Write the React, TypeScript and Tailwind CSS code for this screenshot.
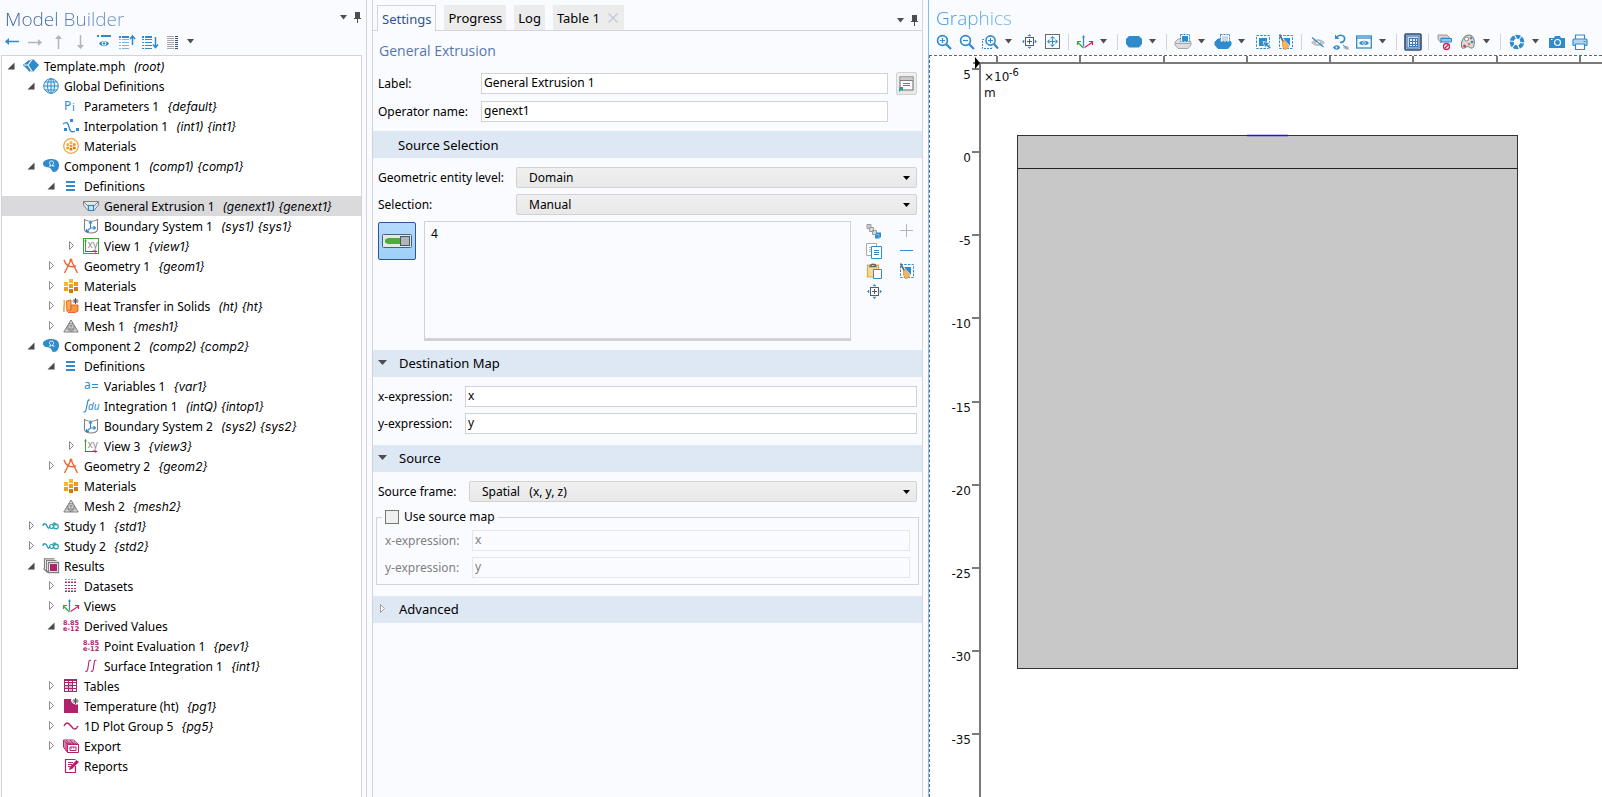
import React, { useState } from "react";

const BLUE = "#2f8bcc";
const GRAY = "#808080";
const LIGHT = "#b4b4b4";
const MAG = "#b0226c";

function Svg({ children, w = 16, h = 16, crisp = false }: { children: React.ReactNode; w?: number; h?: number; crisp?: boolean }) {
  return (
    <svg
      width={w}
      height={h}
      viewBox={`0 0 ${w} ${h}`}
      fill="none"
      aria-hidden="true"
      className="shrink-0 overflow-visible"
      shapeRendering={crisp ? "crispEdges" : undefined}
    >
      {children}
    </svg>
  );
}

/* ---------- tree icons ---------- */

const RootIcon = () => (
  <Svg>
    <path d="M0 7 9 1l2 6-2 7z" fill="#2273b4" />
    <path d="M9 1h1l6 6-6 7H9L6 7z" fill={BLUE} />
    <path d="M0 7 6 2l2 4-3 1 3 2-1 5z" fill={BLUE} />
    <path d="M9.500 1 5 7l4.500 7M1 7h4.500" stroke="#fff" strokeWidth="1.100" />
  </Svg>
);

const GlobeIcon = () => (
  <Svg>
    <circle cx="8" cy="8" r="7.300" stroke={BLUE} fill="#eaf4fc" />
    <ellipse cx="8" cy="8" rx="3.500" ry="7.300" stroke={BLUE} />
    <path d="M8 .7v14.600M.7 8h14.600M2 4h12M2 12h12" stroke={BLUE} />
  </Svg>
);

const ParamIcon = () => (
  <Svg>
    <text x="1" y="11.500" fontSize="12" fontFamily="Noto Sans, sans-serif" fill={BLUE}>P</text>
    <text x="9" y="13" fontSize="11" fontFamily="Noto Sans, sans-serif" fill={BLUE}>i</text>
  </Svg>
);

const InterpIcon = () => (
  <Svg>
    <path d="M0 6c4-3 5-1 6 3s2 6 6 4" stroke={BLUE} strokeWidth="1.300" />
    <path d="M7 1h3v3H7zM1 10h3v3H1zM13 10h3v3h-3z" fill={BLUE} />
  </Svg>
);

const Bricks = () => (
  <>
    <path d="M1 4h4v4H1zM6 1h4v4H6z" fill="#f9b92c" />
    <path d="M11 4h4v4h-4zM6 6h4v4H6zM1 9h4v4H1z" fill="#f39a1e" />
    <path d="M11 9h4v4h-4zM6 11h4v4H6z" fill="#cf7a18" />
  </>
);

const MaterialsIcon = () => <Svg crisp><Bricks /></Svg>;

const GlobalMaterialsIcon = () => (
  <Svg>
    <circle cx="8" cy="8" r="7.300" stroke="#f0a040" strokeWidth="1.200" fill="#fff" />
    <g transform="translate(2.700 2.700) scale(.66)"><Bricks /></g>
  </Svg>
);

const ComponentIcon = () => (
  <Svg>
    <path d="M0 5C1 2 5 1 8 1c5 0 8 2 8 6s-2 7-5 7c-2 0-2-2-3-3-1-2-3-1.500-5-2C1 8.500-.3 7 0 5z" fill={BLUE} />
    <path d="M6 8h2V7C6 6 6 3 8.500 3S11 6 9.500 7v1h2" stroke="#fff" strokeWidth="1" />
  </Svg>
);

const DefinitionsIcon = () => (
  <Svg crisp><path d="M3 3h9v2H3zM3 7h9v2H3zM3 11h9v2H3z" fill={BLUE} /></Svg>
);

const ExtrusionIcon = () => (
  <Svg>
    <path d="M.5 3.500h15v3.500L11 12.500H5L.5 7z" fill="#e6e6e8" stroke={GRAY} />
    <path d="M.5 3.500 5 8M15.500 3.500 11 8" stroke={GRAY} />
    <rect x="5.500" y="7.500" width="5" height="5" fill="#cfe6f8" stroke={BLUE} strokeWidth="1.200" />
  </Svg>
);

const BoundaryIcon = () => (
  <Svg>
    <path d="M1.500 1v11c2 4 11 4 13 0V1M1.500 1c2 3 11 3 13 0" stroke={GRAY} strokeWidth="1.100" />
    <path d="M7.500 4v6h4M7.500 10 4 13M6 5.500l1.500-2L9 5.500M10.500 8l2 2-2 1.500M3.500 11v2.500H6" stroke={BLUE} strokeWidth="1.100" />
  </Svg>
);

const ViewIcon = ({ boxed = false }: { boxed?: boolean }) => (
  <Svg>
    {boxed && <rect x=".5" y=".5" width="15" height="15" stroke="#3fa535" fill="#fff" />}
    <path d="M2.500 1.500v12" stroke="#3fa535" />
    <path d="M1 3.500 2.500 1 4 3.500" fill="#3fa535" />
    <path d="M2 13.500h12" stroke="#d81e62" />
    <path d="m12 12 2.500 1.500L12 15" fill="#d81e62" />
    <text x="4.500" y="9.500" fontSize="10" fontFamily="Noto Sans, sans-serif" fill="#8c8c8c">xy</text>
  </Svg>
);

const GeometryIcon = () => (
  <Svg>
    <path d="M1 2c2 6 6 8 12 6M8 2 1.500 15M8 2l6.500 13" stroke="#ee6a3c" strokeWidth="1.500" />
    <circle cx="8" cy="2" r="1.600" fill="#ee6a3c" />
  </Svg>
);

const Star = () => <path d="M12.500 0v6M9.500 3h6M10.500 1l4 4M14.500 1l-4 4" stroke="#555" />;

const HeatIcon = () => (
  <Svg>
    <path d="M1 2c1.500 4-1 7 0 12" stroke="#f3a43c" strokeWidth="1.600" />
    <path d="M3.500 3 8 2v9l-4 2.500z" fill="#f8b24a" stroke="#e8622c" />
    <path d="M8 7h7v6l-3 1.500H5L8 12z" fill="#f49a36" stroke="#e8622c" />
    <Star />
  </Svg>
);

const MeshIcon = () => (
  <Svg>
    <path d="M8 2 .8 14h14.400z" fill="#d9d9d9" stroke={GRAY} />
    <path d="M4.400 8h7.200L8 14zM6 5.500h4L8 8zM2.500 11h11M8 8v6M4.400 8l2 6M11.600 8l-2 6" stroke={GRAY} strokeWidth=".7" />
  </Svg>
);

const VariablesIcon = () => (
  <Svg>
    <text x="1" y="11" fontSize="12" fontFamily="Noto Sans, sans-serif" fill={BLUE}>a</text>
    <path d="M9 6.500h6M9 9.500h6" stroke={BLUE} strokeWidth="1.100" />
  </Svg>
);

const IntegrationIcon = () => (
  <Svg>
    <path d="M7 2C5 1.500 4.700 3 4.300 5.500L3 12c-.4 2-1.400 2.200-2.600 1.700" stroke={BLUE} strokeWidth="1.200" />
    <text x="5" y="12" fontSize="10" fontStyle="italic" fontFamily="Noto Sans, sans-serif" fill={BLUE}>du</text>
  </Svg>
);

const StudyIcon = () => (
  <Svg>
    <path d="M0 8c0-3 3-3 4 0s2 3 3 0" stroke="#2a9db5" strokeWidth="1.300" />
    <circle cx="8.500" cy="8.500" r="2" stroke="#2a9db5" strokeWidth="1.200" />
    <circle cx="13" cy="8.500" r="2.300" stroke="#2a9db5" strokeWidth="1.200" />
    <path d="M10 7.500c0-4 3-3 3 0" stroke="#2a9db5" strokeWidth="1.200" />
  </Svg>
);

const ResultsIcon = () => (
  <Svg>
    <path d="M5.500 4.500h10v10h-10z" fill="#fff" stroke={GRAY} strokeWidth="1.300" />
    <path d="M7 6h7v7H7z" fill={MAG} />
    <path d="M3.500 12.500V2.500h10M5.500 14.500l-2-2v-10M1.500 10.500V.8h10M.5 10.500l4 4" stroke={GRAY} strokeWidth="1.200" />
  </Svg>
);

const DatasetsIcon = () => (
  <Svg crisp>
    {[1, 4, 7, 10, 13].map((y, i) => (
      <path key={y} d={`M2 ${y + 0.5}h2M5 ${y + 0.5}h2M8 ${y + 0.5}h2M11 ${y + 0.5}h2`} stroke={i === 0 ? "#999" : MAG} />
    ))}
    <path d="M2 3.500h2M5 3.500h2M8 3.500h2M11 3.500h2M2 12h2M5 12h2M8 12h2M11 12h2" stroke="#b9a0ad" />
  </Svg>
);

const AxesIcon = () => (
  <Svg>
    <path d="M6.500 2v10.500" stroke={BLUE} strokeWidth="1.300" />
    <path d="M5 3.500 6.500 1 8 3.500z" fill={BLUE} />
    <path d="M6.500 14 1 8.500M.5 11V7.500H4" stroke="#3fa535" strokeWidth="1.200" />
    <path d="m7.500 13.500 7.500-5M12 7.500h3.500V11" stroke="#d81e62" strokeWidth="1.200" />
  </Svg>
);

const DerivedIcon = () => (
  <Svg>
    <text x="0" y="7" fontSize="6.500" fontWeight="700" fontFamily="DejaVu Sans, sans-serif" fill={MAG}>8.85</text>
    <text x="0" y="13" fontSize="6.500" fontWeight="700" fontFamily="DejaVu Sans, sans-serif" fill={MAG}>e-12</text>
  </Svg>
);

const SurfaceIcon = () => (
  <Svg>
    <path d="M8 2.500C6 1.500 6 3 5.700 5L4.800 11c-.3 2-1 3-2.500 2M13.500 2.500c-2-1-2 .5-2.300 2.500l-.9 6c-.3 2-1 3-2.500 2" stroke={MAG} strokeWidth="1.100" />
  </Svg>
);

const TablesIcon = () => (
  <Svg crisp>
    <path d="M1 7h4v3H1zM5 4h4v9H5z" fill="#e3b3cb" />
    <path d="M1.500 1.500h12v12h-12zM5.500 1v12M9.500 1v12M1 4.500h12M1 7.500h12M1 10.500h12" stroke={MAG} />
    <path d="M1 1h13v2H1z" fill={MAG} />
  </Svg>
);

const TemperatureIcon = () => (
  <Svg>
    <path d="M1 1h7c-.5 3 2 6 7 5.500V15H1z" fill={MAG} />
    <Star />
  </Svg>
);

const PlotIcon = () => (
  <Svg><path d="M1 8c2-4 4-4 7 0s5 4 7 0" stroke={MAG} strokeWidth="1.400" /></Svg>
);

const ExportIcon = () => (
  <Svg>
    <path d="M4.500 6.500h11v8h-11zM4.500 6.500.5 2v7l4 5.500M.5 2h10l5 4.500M2 4h10M3.200 5.300h10.500M2 4v7M3.200 5.500V13M3 2l4 4.500M7 2l4 4.500" stroke={MAG} />
    <path d="M7 9h6v3.500H7z" stroke={MAG} /><path d="M8 10h4" stroke={MAG} strokeDasharray="1 1" />
  </Svg>
);

const ReportsIcon = () => (
  <Svg>
    <path d="M12.500 8v6.500h-10v-13h10" stroke={MAG} strokeWidth="1.200" />
    <path d="M5 4.500h5M5 6.500h4M5 8.500h2" stroke={MAG} />
    <path d="m6 12 .8-3L13.500 2 16 4l-7 7z" fill={MAG} />
  </Svg>
);

type Node = { level: number; state: "open" | "closed" | "leaf"; icon: React.ReactNode; name: string; tag?: string };

const tree: Node[] = [
  { level: 0, state: "open", icon: <RootIcon />, name: "Template.mph", tag: "(root)" },
  { level: 1, state: "open", icon: <GlobeIcon />, name: "Global Definitions" },
  { level: 2, state: "leaf", icon: <ParamIcon />, name: "Parameters 1", tag: "{default}" },
  { level: 2, state: "leaf", icon: <InterpIcon />, name: "Interpolation 1", tag: "(int1) {int1}" },
  { level: 2, state: "leaf", icon: <GlobalMaterialsIcon />, name: "Materials" },
  { level: 1, state: "open", icon: <ComponentIcon />, name: "Component 1", tag: "(comp1) {comp1}" },
  { level: 2, state: "open", icon: <DefinitionsIcon />, name: "Definitions" },
  { level: 3, state: "leaf", icon: <ExtrusionIcon />, name: "General Extrusion 1", tag: "(genext1) {genext1}" },
  { level: 3, state: "leaf", icon: <BoundaryIcon />, name: "Boundary System 1", tag: "(sys1) {sys1}" },
  { level: 3, state: "closed", icon: <ViewIcon boxed />, name: "View 1", tag: "{view1}" },
  { level: 2, state: "closed", icon: <GeometryIcon />, name: "Geometry 1", tag: "{geom1}" },
  { level: 2, state: "closed", icon: <MaterialsIcon />, name: "Materials" },
  { level: 2, state: "closed", icon: <HeatIcon />, name: "Heat Transfer in Solids", tag: "(ht) {ht}" },
  { level: 2, state: "closed", icon: <MeshIcon />, name: "Mesh 1", tag: "{mesh1}" },
  { level: 1, state: "open", icon: <ComponentIcon />, name: "Component 2", tag: "(comp2) {comp2}" },
  { level: 2, state: "open", icon: <DefinitionsIcon />, name: "Definitions" },
  { level: 3, state: "leaf", icon: <VariablesIcon />, name: "Variables 1", tag: "{var1}" },
  { level: 3, state: "leaf", icon: <IntegrationIcon />, name: "Integration 1", tag: "(intQ) {intop1}" },
  { level: 3, state: "leaf", icon: <BoundaryIcon />, name: "Boundary System 2", tag: "(sys2) {sys2}" },
  { level: 3, state: "closed", icon: <ViewIcon />, name: "View 3", tag: "{view3}" },
  { level: 2, state: "closed", icon: <GeometryIcon />, name: "Geometry 2", tag: "{geom2}" },
  { level: 2, state: "leaf", icon: <MaterialsIcon />, name: "Materials" },
  { level: 2, state: "leaf", icon: <MeshIcon />, name: "Mesh 2", tag: "{mesh2}" },
  { level: 1, state: "closed", icon: <StudyIcon />, name: "Study 1", tag: "{std1}" },
  { level: 1, state: "closed", icon: <StudyIcon />, name: "Study 2", tag: "{std2}" },
  { level: 1, state: "open", icon: <ResultsIcon />, name: "Results" },
  { level: 2, state: "closed", icon: <DatasetsIcon />, name: "Datasets" },
  { level: 2, state: "closed", icon: <AxesIcon />, name: "Views" },
  { level: 2, state: "open", icon: <DerivedIcon />, name: "Derived Values" },
  { level: 3, state: "leaf", icon: <DerivedIcon />, name: "Point Evaluation 1", tag: "{pev1}" },
  { level: 3, state: "leaf", icon: <SurfaceIcon />, name: "Surface Integration 1", tag: "{int1}" },
  { level: 2, state: "closed", icon: <TablesIcon />, name: "Tables" },
  { level: 2, state: "closed", icon: <TemperatureIcon />, name: "Temperature (ht)", tag: "{pg1}" },
  { level: 2, state: "closed", icon: <PlotIcon />, name: "1D Plot Group 5", tag: "{pg5}" },
  { level: 2, state: "closed", icon: <ExportIcon />, name: "Export" },
  { level: 2, state: "leaf", icon: <ReportsIcon />, name: "Reports" },
];

const indent = ["pl-[3px]", "pl-[23px]", "pl-[43px]", "pl-[63px]"];

/* ---------- shared bits ---------- */

const Down = () => (
  <Svg w={9} h={5}><path d="M1 0h7L4.500 4.500z" fill="#4d4d4d" /></Svg>
);

const Pin = () => (
  <Svg w={9} h={11} crisp><path d="M2 0h5v6h1v1H5v4H4V7H1V6h1z" fill="#4d4d4d" /></Svg>
);

function IconButton({ label, children, className = "w-[23px]" }: { label: string; children: React.ReactNode; className?: string }) {
  return (
    <button type="button" aria-label={label} className={`flex h-5 shrink-0 items-center justify-center ${className}`}>
      {children}
    </button>
  );
}

const Arrow = ({ dir, color }: { dir: number; color: string }) => (
  <Svg>
    <g transform={`rotate(${dir} 8 8)`}>
      <path d="M2 7.500h13" stroke={color} strokeWidth="1.500" />
      <path d="M1 7.500 5 4v7z" fill={color} />
    </g>
  </Svg>
);

const ShowIcon = () => (
  <Svg>
    <path d="M1 2h2M5 2h10" stroke={BLUE} strokeWidth="2" />
    <path d="M3 9.500C5 6 11 6 13 9.500c-2 3.500-8 3.500-10 0z" fill={BLUE} />
    <circle cx="8" cy="9.500" r="2.300" fill="#fff" /><circle cx="8" cy="9.500" r="1.200" fill={BLUE} />
  </Svg>
);

const ListArrow = ({ up }: { up: boolean }) => (
  <Svg>
    <g shapeRendering="crispEdges">
      <path d="M0 2.500h2M3 2.500h7M0 14.500h2M3 14.500h7M0 5.500h2M3 5.500h7M0 8.500h2M3 8.500h7M0 11.500h2M3 11.500h7" stroke={up ? "#7db5de" : BLUE} />
      <path d="M0 2.500h2M3 2.500h7" stroke={BLUE} strokeWidth="2" />
    </g>
    {up ? (
      <path d="M13.500 3v8M11 5l2.500-3L16 5" stroke={BLUE} strokeWidth="1.500" />
    ) : (
      <path d="M13.500 3v10M11 10.500l2.500 3 2.500-3" stroke={BLUE} strokeWidth="1.500" />
    )}
  </Svg>
);

const ColumnsIcon = () => (
  <Svg crisp>
    <path d="M2 2.500h7M2 4.500h7M2 6.500h7M2 8.500h7M2 10.500h7M2 12.500h7M2 14.500h7" stroke="#a9a9a9" />
    <path d="M10 2.500h3M10 4.500h3M10 6.500h3M10 8.500h3M10 10.500h3M10 12.500h3M10 14.500h3" stroke="#2f4f78" />
  </Svg>
);

/* ---------- graphics toolbar icons ---------- */

const Zoom = ({ plus }: { plus: boolean }) => (
  <Svg>
    <circle cx="6.500" cy="6.500" r="4.900" stroke={BLUE} strokeWidth="1.700" />
    <path d="m10 10 5 5" stroke={BLUE} strokeWidth="2.200" />
    <path d={plus ? "M4 6.500h5M6.500 4v5" : "M4 6.500h5"} stroke={BLUE} strokeWidth="1.200" />
  </Svg>
);

const ZoomBox = () => (
  <Svg w={18}>
    <path d="M3 5.500H1.500v9H11V13" stroke={BLUE} strokeDasharray="2 1" />
    <circle cx="9.500" cy="6.500" r="4.600" stroke={BLUE} strokeWidth="1.600" />
    <path d="m13 10 4 4.500" stroke={BLUE} strokeWidth="2.200" />
    <path d="M7 6.500h5M9.500 4v5" stroke={BLUE} strokeWidth="1.200" />
  </Svg>
);

const ZoomSelected = () => (
  <Svg w={15} h={15}>
    <rect x="3.500" y="3.500" width="8" height="8" stroke="#5c5c5c" />
    <path d="M5 7.500h5M7.500 5v5" stroke="#5c5c5c" />
    <path d="M6 2 7.500.3 9 2zM6 13l1.500 1.700L9 13zM2 6 .3 7.500 2 9zM13 6l1.700 1.500L13 9z" fill={BLUE} stroke={BLUE} strokeWidth=".5" />
  </Svg>
);

const ZoomExtents = () => (
  <Svg w={15} h={15}>
    <rect x=".5" y=".5" width="14" height="14" stroke="#6a6a6a" />
    <path d="M7.500 5v5M5 7.500h5" stroke={BLUE} />
    <path d="M5 4.500 7.500 2 10 4.500zM5 10.500 7.500 13l2.500-2.500zM4.500 5 2 7.500 4.500 10zM10.500 5 13 7.500 10.500 10z" fill={BLUE} />
  </Svg>
);

const BlobIcon = () => <Svg><path d="M3 2h10l3 3v5l-3 3.500H3L0 10V5z" fill={BLUE} /></Svg>;

const BlobSelect = ({ solid }: { solid: boolean }) => (
  <Svg>
    <path d="M3 5h10l3 3v3l-3 3.500H3L0 11V8z" fill={solid ? BLUE : "#dcdcdc"} stroke={solid ? BLUE : "#a8a8a8"} />
    {!solid && <path d="M0 9.500h16" stroke="#a8a8a8" />}
    <rect x="5.500" y="1" width="9" height="7" fill="#fff" />
    <rect x="7" y="2" width="6" height="5" fill={solid ? "#cfd6dc" : BLUE} />
    <rect x="5.500" y=".5" width="9" height="7" stroke={BLUE} strokeDasharray="2 1" />
  </Svg>
);

const SelectBox = () => (
  <Svg>
    <rect x="1.500" y="1.500" width="13" height="13" stroke={BLUE} strokeDasharray="2.500 1.200" />
    <rect x="4" y="4" width="8" height="8" fill={BLUE} />
    <path d="M8 7.500 15 9l-2 1.500 3 3-1.500 1.500-3-3-1.500 2z" fill={BLUE} stroke="#fff" strokeWidth=".7" />
  </Svg>
);

const BroomIcon = () => (
  <Svg>
    <rect x="1.500" y="1.500" width="13" height="13" stroke={BLUE} strokeDasharray="2.500 1.200" />
    <path d="M5 4h7v8z" fill={BLUE} />
    <path d="M1.500.5 5.500 8" stroke="#666" strokeWidth="1.600" />
    <path d="m4.500 8 2-1.500 4 5.500c0 2-1.500 3.500-4 3.500L4.500 12z" fill="#f6b562" stroke="#e08c2e" strokeWidth=".7" />
  </Svg>
);

const EyeOff = () => (
  <Svg>
    <path d="M1 8.500c3-4.500 11-4.500 14 0-3 4.500-11 4.500-14 0z" fill="#c4c4c4" />
    <circle cx="8" cy="8.500" r="2.500" fill="#fff" stroke="#aaa" />
    <path d="m2 3.500 11.500 9.500" stroke={BLUE} strokeWidth="1.200" />
  </Svg>
);

const ResetView = () => (
  <Svg>
    <path d="M4 3c3.500-3.500 8.500-1 7.500 2.500C11 8 9 8.500 7 8.500" stroke={BLUE} strokeWidth="1.600" />
    <path d="M2 .5V5h4.500z" fill={BLUE} />
    <path d="M0 13.500c2-3 6-3 7 0-1 3-5 3-7 0z" fill={BLUE} /><circle cx="3.500" cy="13.500" r="1" fill="#fff" />
    <path d="M10 13.500c1-2 5-2 6 0-1 2.500-5 2.500-6 0z" fill="#c4c4c4" /><path d="m10 11 5.500 4.500" stroke={BLUE} />
  </Svg>
);

const WindowEye = () => (
  <Svg>
    <rect x=".7" y="2" width="14.600" height="12" stroke={BLUE} strokeWidth="1.300" />
    <path d="M1 4h14" stroke={BLUE} strokeWidth="1.300" />
    <path d="M3 9c2-3 8-3 10 0-2 3-8 3-10 0z" fill={BLUE} /><circle cx="8" cy="9" r="1.700" fill="#fff" /><circle cx="8" cy="9" r=".9" fill={BLUE} />
  </Svg>
);

const GridIcon = () => (
  <Svg w={18} h={18}>
    <rect x="1" y="1" width="16" height="16" rx="1" fill="#a9cdee" stroke="#2b4a7d" strokeWidth="1.600" />
    <rect x="3" y="3" width="12" height="12" fill="#c4dcf4" stroke="#5a6f8c" />
    <g shapeRendering="crispEdges">
      <path d="M5 5h9v9H5z" fill="#3b7cc0" />
      <path d="M6 6h2v2H6zM9 6h2v2H9zM12 6h1v2h-1zM6 9h2v2H6zM9 9h2v2H9zM12 9h1v2h-1zM6 12h2v1H6zM9 12h2v1H9zM12 12h1v1h-1z" fill="#eaf3fc" />
    </g>
  </Svg>
);

const ClipIcon = () => (
  <Svg>
    <path d="M1 1h9l3 3H4v5L1 5z" fill="#d5d5d5" stroke="#999" />
    <path d="M4 4.500h10.500V8H4z" fill="#8cc6ec" stroke={BLUE} />
    <circle cx="9.500" cy="12.500" r="3" fill="#fff" stroke="#cf2058" strokeWidth="1.300" /><path d="m7.500 14.500 4-4" stroke="#cf2058" strokeWidth="1.300" />
  </Svg>
);

const PaletteIcon = () => (
  <Svg>
    <path d="M1.500 13C1 8 3 1 9 1c6 0 6 9 4.500 12-2 3-5-1-6-.5-2 1-5 3-6 .5z" fill="#d9d9d9" stroke="#777" />
    <circle cx="6.500" cy="5" r="2" fill="#fff" stroke="#888" />
    <circle cx="11" cy="4" r="1.400" fill="#888" /><circle cx="12" cy="8" r="1.300" fill={BLUE} />
    <circle cx="9" cy="10" r="1.300" fill="#ee7a2c" /><circle cx="4.500" cy="12" r="1.300" fill="#d81e62" />
  </Svg>
);

const ApertureIcon = () => (
  <Svg>
    <circle cx="8" cy="8" r="5.300" stroke={BLUE} strokeWidth="4" />
    <path d="M5 0 7.500 5M13 1.500 9.500 6M16 9l-6-.5M11 16l-2.500-5M3 14l3-4M0 7l6 .5" stroke="#fafbff" strokeWidth="1.200" />
  </Svg>
);

const CameraIcon = () => (
  <Svg>
    <path d="M0 4h5l1-2h5l1 2h4v10H0z" fill={BLUE} />
    <circle cx="8.500" cy="8.500" r="3" stroke="#fff" strokeWidth="1.200" />
    <path d="M2 5.500h1.500" stroke="#fff" />
  </Svg>
);

const PrinterIcon = () => (
  <Svg>
    <path d="M3.500 5V1h9v4" fill="#fff" stroke={BLUE} strokeWidth="1.200" />
    <rect x="1" y="5" width="14" height="6.500" rx="1" fill="#b5d3ee" stroke={BLUE} strokeWidth="1.200" />
    <path d="M3.500 10h9v5.500h-9z" fill="#fff" stroke={BLUE} strokeWidth="1.200" />
    <path d="M11.500 7.500h2" stroke={BLUE} />
  </Svg>
);

/* ---------- selection list icons ---------- */

const ChainIcon = () => (
  <Svg>
    <path d="M1 1.500h4v4H1z" fill="#cfcfcf" stroke="#999" /><path d="M3.500 4.500h4v4h-4zM6.500 7.500h4v4h-4z" fill="#dcdcdc" stroke="#999" />
    <path d="m9 11 2-1.500h4V14l-2 1.500H9z" fill={BLUE} /><path d="M9 11.500h4V15" stroke="#8cc6ec" strokeWidth=".8" />
  </Svg>
);

const CopyIcon = () => (
  <Svg>
    <path d="M.5.500h10v12H.5z" fill="#fff" stroke="#aaa" /><path d="M3 4.500h3M3 6.500h3M3 8.500h3" stroke="#bbb" />
    <path d="M5.500 3.500h10v12h-10z" fill="#fff" stroke={BLUE} /><path d="M8 7.500h5M8 9.500h5M8 11.500h5" stroke={BLUE} strokeWidth="1.100" />
  </Svg>
);

const PasteIcon = () => (
  <Svg>
    <path d="M1.500 2h11v12h-11z" fill="#fbd795" stroke="#eea23a" strokeWidth="1.200" />
    <path d="M4 3.500c0-3 6-3 6 0z" fill="#fff" stroke="#666" strokeWidth="1.300" />
    <path d="M7.500 6.500h8v9h-8z" fill="#fff" stroke={BLUE} />
  </Svg>
);

const PlusIcon = () => <Svg crisp><path d="M1 7.500h13M7.500 1v13" stroke={LIGHT} /></Svg>;
const MinusIcon = () => <Svg crisp><path d="M1 7.500h13" stroke={BLUE} /></Svg>;

const NewWindowIcon = () => (
  <Svg w={17}>
    <rect x="2" y="1" width="13" height="13" fill="#fff" stroke={GRAY} strokeWidth="1.200" />
    <path d="M2.500 1.500h12V4h-12z" fill="#ccc" /><path d="M2 4.500h13" stroke={GRAY} />
    <path d="M5 7.500h7M5 9.500h7" stroke="#18a58a" strokeWidth="1.200" />
    <path d="M1 11h4v4L3.500 13.500 1 16v-3l1-1z" fill="#18a58a" />
  </Svg>
);

/* ---------- form controls ---------- */

const box = "h-[21px] w-full min-w-0 border px-[2px] pb-[2px] outline-none";

function Select({ id, value }: { id: string; value: string }) {
  return (
    <div className="relative min-w-0 flex-1">
      <select
        id={id}
        className="block h-[21px] w-full appearance-none rounded-[2px] border border-[#d2d2d4] bg-linear-to-b from-[#f0f0f1] to-[#e8e8e9] pl-3 outline-none"
      >
        <option>{value}</option>
      </select>
      <svg width="7" height="4" viewBox="0 0 7 4" aria-hidden="true" className="pointer-events-none absolute top-[9px] right-[7px]">
        <path d="M0 0h7L3.500 4z" fill="#000" />
      </svg>
    </div>
  );
}

function Band({ title, state }: { title: string; state?: "open" | "closed" }) {
  return (
    <h3 className="h-[27px] bg-[#dee8f4] text-[13px]">
      <button type="button" className={`flex h-full w-full items-center pl-[5px] text-left ${state ? "pb-[2px]" : ""}`}>
        <span className={state ? "w-[21px]" : "w-5"}>
          {state === "open" && <Svg w={9} h={6}><path d="M0 0h9L4.500 5z" fill="#4d4d4d" /></Svg>}
          {state === "closed" && <Svg w={9} h={9}><path d="M2.500.500v8l4-4z" stroke="#a0a0a0" fill="#fff" /></Svg>}
        </span>
        {title}
      </button>
    </h3>
  );
}

function Field({ id, label, value, width, disabled }: { id: string; label: string; value: string; width: string; disabled?: boolean }) {
  return (
    <div className={`flex items-center ${disabled ? "text-[#808080]" : ""}`}>
      <label htmlFor={id} className={`shrink-0 ${width}`}>{label}</label>
      <input
        id={id}
        defaultValue={value}
        disabled={disabled}
        className={`${box} ${disabled ? "border-[#e6e7ea] bg-[#fafbff]" : "border-[#d2d2d4] bg-white"}`}
      />
    </div>
  );
}

/* ---------- panels ---------- */

function ModelBuilder() {
  const [selected, setSelected] = useState(7);
  return (
    <aside className="flex w-[367px] shrink-0 flex-col border-r border-[#d2d4d8]">
      <header className="flex h-[30px] items-center justify-between pr-1 pl-[5px]">
        <h1 className="bg-linear-to-r from-[#2f5596] to-[#7398c8] bg-clip-text pt-[7px] font-['Open_Sans','Noto_Sans',sans-serif] text-[19px] leading-7 font-light text-transparent">Model Builder</h1>
        <div className="flex items-center gap-[5px] pt-1">
          <IconButton label="Panel menu" className="w-[9px]"><Down /></IconButton>
          <IconButton label="Pin panel" className="w-[9px]"><Pin /></IconButton>
        </div>
      </header>
      <div className="flex h-[25px] items-center pb-[2px]">
        <IconButton label="Previous"><Arrow dir={0} color={BLUE} /></IconButton>
        <IconButton label="Next"><Arrow dir={180} color={LIGHT} /></IconButton>
        <IconButton label="Move up"><Arrow dir={90} color={LIGHT} /></IconButton>
        <IconButton label="Move down"><Arrow dir={270} color={LIGHT} /></IconButton>
        <IconButton label="Show"><ShowIcon /></IconButton>
        <IconButton label="Collapse all"><ListArrow up /></IconButton>
        <IconButton label="Expand all"><ListArrow up={false} /></IconButton>
        <IconButton label="Node text"><ColumnsIcon /></IconButton>
        <IconButton label="Node text menu" className="w-[13px]"><Down /></IconButton>
      </div>
      <ul role="tree" aria-label="Model tree" className="mr-1 ml-px min-h-0 flex-1 overflow-hidden border border-b-0 border-[#d2d4d8] bg-white">
        {tree.map((n, i) => (
          <li
            key={i}
            role="treeitem"
            aria-level={n.level + 1}
            aria-selected={i === selected}
            aria-expanded={n.state === "leaf" ? undefined : n.state === "open"}
            onClick={() => setSelected(i)}
            className={`flex h-5 items-center whitespace-nowrap ${indent[n.level]} ${i === selected ? "bg-[#dadadc]" : ""}`}
          >
            <span className="mr-[6px] w-3">
              {n.state === "open" && <Svg w={12} h={12}><path d="M9.500 2.500v7h-7z" fill="#4a4a4a" /></Svg>}
              {n.state === "closed" && <Svg w={12} h={12}><path d="M4.500 1.500v8l4-4z" stroke="#8c8c8c" fill="#fff" /></Svg>}
            </span>
            <span className="mr-[5px] flex w-4">{n.icon}</span>
            <span className="pt-px">{n.name}</span>
            {n.tag && <i className="pt-px pl-2 font-['Inter','Noto_Sans',sans-serif]">{n.tag}</i>}
          </li>
        ))}
      </ul>
    </aside>
  );
}

const tab = "flex items-center bg-[#ececec] px-1 text-[13px]";

function Settings() {
  return (
    <section className="ml-[5px] flex w-[551px] shrink-0 flex-col border-x border-[#d2d4d8]">
      <div className="flex h-[31px] items-end border-b border-[#d2d4d8] pt-[5px] pl-1">
        <nav className="flex h-full gap-2">
          <button type="button" className="-mb-px flex h-[26px] items-center border border-b-0 border-[#d2d4d8] bg-[#fafbff] px-1 text-[13px] text-[#2f5596]">Settings</button>
          <button type="button" className={tab}>Progress</button>
          <button type="button" className={tab}>Log</button>
          <button type="button" className={`${tab} gap-2 pr-[6px]`}>
            Table 1
            <Svg w={10} h={10}><path d="m.5.500 9 9M9.500.500l-9 9" stroke="#c0cbd8" strokeWidth="1.200" /></Svg>
          </button>
        </nav>
        <div className="ml-auto flex items-center gap-[5px] pr-[3px]">
          <IconButton label="Panel menu" className="w-[9px]"><Down /></IconButton>
          <IconButton label="Pin panel" className="w-[9px]"><Pin /></IconButton>
        </div>
      </div>
      <h2 className="h-[42px] pl-[6px] font-['Open_Sans','Noto_Sans',sans-serif] text-sm leading-10 text-[#5577b0]">General Extrusion</h2>

      <div className="flex pr-[5px] pl-[5px]">
        <div className="flex flex-1 flex-col gap-[7px] pb-[9px]">
          <Field id="label" label="Label:" value="General Extrusion 1" width="w-[103px]" />
          <Field id="operator" label="Operator name:" value="genext1" width="w-[103px]" />
        </div>
        <button type="button" aria-label="Open in new window" className="-mt-px ml-2 flex h-[23px] w-[21px] items-center justify-center rounded-[2px] border border-[#d2d2d4] bg-linear-to-b from-[#f0f0f1] to-[#e8e8e9]">
          <NewWindowIcon />
        </button>
      </div>

      <Band title="Source Selection" />
      <div className="flex flex-col gap-[6px] px-[5px] py-[9px]">
        <div className="flex items-center">
          <label htmlFor="level" className="w-[138px] shrink-0">Geometric entity level:</label>
          <Select id="level" value="Domain" />
        </div>
        <div className="flex items-center">
          <label htmlFor="selection" className="w-[138px] shrink-0">Selection:</label>
          <Select id="selection" value="Manual" />
        </div>
        <div className="flex items-start">
          <button type="button" aria-label="Activate selection" aria-pressed="true" className="mt-px flex h-[38px] w-[38px] items-center justify-center rounded-[2px] border border-[#2b5797] bg-linear-to-b from-[#b4dafb] to-[#9fd0f8]">
            <Svg w={30} h={14}>
              <rect x=".5" y=".5" width="29" height="13" rx="1" fill="#e3e9e3" stroke="#4d6076" />
              <path d="M6 4h12v6H6L3 8.500v-3z" fill="#4dab42" />
              <rect x="18.500" y="2.500" width="9" height="9" fill="#b4b4b6" stroke="#3f5878" />
            </Svg>
          </button>
          <ul aria-label="Selected domains" className="ml-2 h-[120px] flex-1 border border-b-[3px] border-[#d2d2d4] px-[6px] py-[3px]">
            <li className="leading-[18px]">4</li>
          </ul>
          <div className="grid grid-cols-[16px_16px] gap-x-[17px] pr-[2px] pl-[15px]">
            <IconButton label="Create selection" className="w-4"><ChainIcon /></IconButton>
            <IconButton label="Add" className="w-4"><PlusIcon /></IconButton>
            <IconButton label="Copy selection" className="w-4"><CopyIcon /></IconButton>
            <IconButton label="Remove" className="w-4"><MinusIcon /></IconButton>
            <IconButton label="Paste selection" className="w-4"><PasteIcon /></IconButton>
            <IconButton label="Clear selection" className="w-4"><BroomIcon /></IconButton>
            <IconButton label="Zoom to selection" className="w-4"><ZoomSelected /></IconButton>
          </div>
        </div>
      </div>

      <Band title="Destination Map" state="open" />
      <div className="flex flex-col gap-[6px] px-[5px] pt-[9px] pb-[11px]">
        <Field id="dest-x" label="x-expression:" value="x" width="w-[87px]" />
        <Field id="dest-y" label="y-expression:" value="y" width="w-[87px]" />
      </div>

      <Band title="Source" state="open" />
      <div className="flex items-center px-[5px] pt-[9px] pb-2">
        <label htmlFor="frame" className="w-[91px] shrink-0">Source frame:</label>
        <Select id="frame" value={"Spatial\u00a0\u00a0 (x, y, z)"} />
      </div>
      <fieldset className="mr-[3px] mb-[11px] ml-[3px] border border-[#d2d4d8] px-2 pb-[6px]">
        <legend className="-ml-[3px] flex h-[14px] items-center px-[3px]">
          <input type="checkbox" id="use-map" className="h-[14px] w-[14px] appearance-none border border-[#777] bg-[#efefef]" />
          <label htmlFor="use-map" className="pl-[5px] leading-[14px]">Use source map</label>
        </legend>
        <div className="flex flex-col gap-[6px] pt-[6px]">
          <Field id="src-x" label="x-expression:" value="x" width="w-[87px]" disabled />
          <Field id="src-y" label="y-expression:" value="y" width="w-[87px]" disabled />
        </div>
      </fieldset>
      <Band title="Advanced" state="closed" />
    </section>
  );
}

const Sep = () => <span className="flex w-[9px] shrink-0 justify-center"><span className="h-4 w-px bg-[#d2d4d8]" /></span>;
const Drop = ({ label }: { label: string }) => <IconButton label={label} className="mr-[2px] w-[15px]"><Down /></IconButton>;

const xTicks = [68, 151, 235, 318, 401, 484, 568, 651];
const yTicks = [5, 0, -5, -10, -15, -20, -25, -30, -35];
const yAt = (i: number, base: number) => Math.round(base + i * 83.2 - 0.2);

function Plot() {
  return (
    <svg width="100%" height="100%" role="img" aria-label="Geometry plot" className="block min-h-0 flex-1 font-['DejaVu_Sans',sans-serif] text-xs">
      <rect x="88" y="79" width="500" height="533" fill="#c8c8c8" stroke="#333" shapeRendering="crispEdges" transform="translate(-.5 .5)" />
      <path d="M88 112.500h500" stroke="#222" />
      <path d="M317 79.500h41" stroke="#1414f0" strokeWidth="1.500" />
      <g stroke="#7a7a7a" strokeWidth="2" shapeRendering="crispEdges">
        <path d="M43 7h2000M50 7v2000" />
        {xTicks.map((x) => <path key={x} d={`M${x - 1} 0v7`} />)}
        {yTicks.map((v, i) => <path key={v} d={`M42 ${yAt(i, 13)}h8`} />)}
      </g>
      <path d="M45 1v12l5-6z" fill="#000" />
      {yTicks.map((v, i) => (
        <text key={v} x="41" y={yAt(i, 23)} textAnchor="end" fill="#111">{v}</text>
      ))}
      <text x="54" y="25" fill="#111">×10</text>
      <text x="79" y="20" fontSize="10" fill="#111">-6</text>
      <text x="54" y="41" fill="#111">m</text>
    </svg>
  );
}

function Graphics() {
  return (
    <main className="ml-[5px] flex min-w-0 flex-1 flex-col border-l border-[#7cc0f4]">
      <h1 className="h-[30px] bg-linear-to-r from-[#1f87e0] to-[#6fbcf5] bg-[length:90px_100%] bg-clip-text pt-1 pl-[7px] font-['Open_Sans','Noto_Sans',sans-serif] text-[19px] leading-7 font-light text-transparent">Graphics</h1>
      <div className="flex h-[25px] items-center overflow-hidden pb-[2px] pl-[3px]">
        <IconButton label="Zoom in"><Zoom plus /></IconButton>
        <IconButton label="Zoom out"><Zoom plus={false} /></IconButton>
        <IconButton label="Zoom box"><ZoomBox /></IconButton>
        <Drop label="Zoom menu" />
        <IconButton label="Zoom selected"><ZoomSelected /></IconButton>
        <IconButton label="Zoom extents"><ZoomExtents /></IconButton>
        <Sep />
        <IconButton label="View"><AxesIcon /></IconButton>
        <Drop label="View menu" />
        <Sep />
        <IconButton label="Select domains"><BlobIcon /></IconButton>
        <Drop label="Select menu" />
        <Sep />
        <IconButton label="Click and hide"><BlobSelect solid={false} /></IconButton>
        <Drop label="Hide menu" />
        <IconButton label="Select entities"><BlobSelect solid /></IconButton>
        <Drop label="Entity menu" />
        <IconButton label="Select box"><SelectBox /></IconButton>
        <IconButton label="Deselect box"><BroomIcon /></IconButton>
        <Sep />
        <IconButton label="Hide"><EyeOff /></IconButton>
        <IconButton label="Reset hiding"><ResetView /></IconButton>
        <IconButton label="View hidden"><WindowEye /></IconButton>
        <Drop label="Hidden menu" />
        <Sep />
        <IconButton label="Show grid"><GridIcon /></IconButton>
        <Sep />
        <IconButton label="Clipping"><ClipIcon /></IconButton>
        <IconButton label="Colors"><PaletteIcon /></IconButton>
        <Drop label="Color menu" />
        <Sep />
        <IconButton label="Environment"><ApertureIcon /></IconButton>
        <Drop label="Environment menu" />
        <IconButton label="Image snapshot"><CameraIcon /></IconButton>
        <IconButton label="Print"><PrinterIcon /></IconButton>
      </div>
      <div className="flex min-h-0 flex-1 overflow-hidden border-t border-l border-dashed border-[#666] bg-white">
        <Plot />
      </div>
    </main>
  );
}

export default function App() {
  return (
    <div className="flex h-screen overflow-hidden bg-[#fafbff] font-['Noto_Sans','Open_Sans',sans-serif] text-xs leading-4 text-black">
      <ModelBuilder />
      <Settings />
      <Graphics />
    </div>
  );
}
